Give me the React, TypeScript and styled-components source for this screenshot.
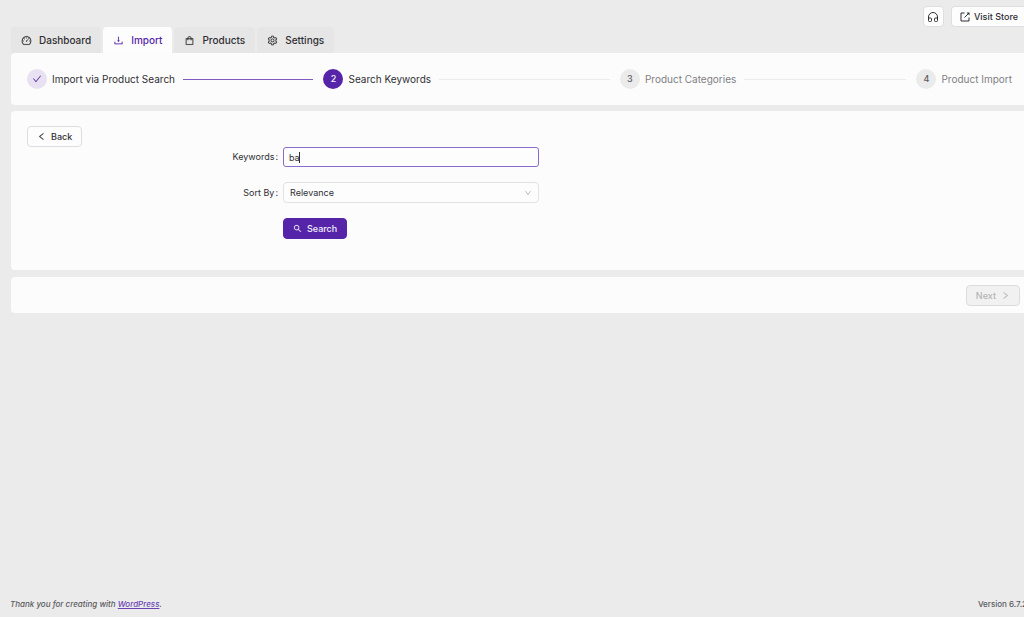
import React from "react";
import styled, { createGlobalStyle, css } from "styled-components";
import {
  AiOutlineCheck,
  AiOutlineDashboard,
  AiOutlineDown,
  AiOutlineDownload,
  AiOutlineLeft,
  AiOutlineRight,
  AiOutlineSearch,
  AiOutlineSetting,
  AiOutlineShopping,
} from "react-icons/ai";

const purple = "#5624a8";

const GlobalStyle = createGlobalStyle`
  *, *::before, *::after { box-sizing: border-box; }
  body {
    margin: 0;
    background: #ebebeb;
    color: #2f2f33;
    font-family: Inter, "Liberation Sans", sans-serif;
    font-size: 9px;
    line-height: 14px;
  }
  button, input, select { font: inherit; color: inherit; margin: 0; }
  svg { flex: none; display: block; }
`;

const Page = styled.div`
  min-height: 100vh;
  display: flex;
  flex-direction: column;
  padding-left: 11px;
  overflow-x: hidden;
`;

const TopBar = styled.header`
  display: flex;
  justify-content: flex-end;
  gap: 7px;
  height: 27px;
  padding-top: 6px;
`;

const Button = styled.button<{ $kind?: "primary" | "icon" | "bleed" }>`
  display: inline-flex;
  align-items: center;
  justify-content: center;
  gap: 5px;
  height: 21px;
  padding: 0 9px;
  border: 1px solid #dfdde2;
  border-radius: 4px;
  background: #fdfdfd;
  font-weight: 500;
  white-space: nowrap;

  ${({ $kind }) =>
    $kind === "primary" &&
    css`
      background: ${purple};
      border-color: ${purple};
      color: #f4effc;
    `}
  ${({ $kind }) =>
    $kind === "icon" &&
    css`
      width: 21px;
      padding: 0;
    `}
  ${({ $kind }) =>
    $kind === "bleed" &&
    css`
      gap: 4px;
      padding: 0 6px 0 8px;
      border-right: 0;
      border-radius: 4px 0 0 4px;
    `}
  &:disabled {
    background: #f1f1f1;
    border-color: #dcdcdc;
    color: #b4b4b4;
  }
`;

const Tabs = styled.nav`
  display: flex;
  gap: 2px;
`;

const Tab = styled.button<{ $active?: boolean }>`
  display: flex;
  align-items: center;
  gap: 7px;
  height: 26px;
  padding: 0 10px;
  border: 0;
  border-radius: 4px 4px 0 0;
  background: ${({ $active }) => ($active ? "#fdfdfd" : "#e6e6e6")};
  color: ${({ $active }) => ($active ? purple : "#2f2f33")};
  font-size: 10px;
  font-weight: 500;
`;

const Panel = styled.section`
  background: #fcfcfc;
  border-radius: 4px 0 0 4px;
`;

const Steps = styled.ol`
  display: flex;
  margin: 0;
  padding: 16px 12px 16px 16px;
  list-style: none;
`;

const Step = styled.li<{ $state: "done" | "active" | "wait" }>`
  display: flex;
  align-items: center;
  flex: 1;
  min-width: 0;
  height: 20px;
  font-size: 10px;
  white-space: nowrap;
  color: ${({ $state }) => ($state === "wait" ? "#7f7f83" : "#2f2f33")};

  &:not(:last-child)::after {
    content: "";
    flex: 1;
    height: 1px;
    margin: 0 10px 0 8px;
    background: ${({ $state }) => ($state === "done" ? "#7d5bc0" : "#ececec")};
  }
  &:last-child { flex: none; }
`;

const StepMark = styled.span<{ $state: "done" | "active" | "wait" }>`
  display: flex;
  align-items: center;
  justify-content: center;
  width: 20px;
  height: 20px;
  margin-right: 5px;
  border-radius: 50%;
  font-size: 9px;
  font-weight: 500;
  background: ${({ $state }) =>
    $state === "done" ? "#e7e1f1" : $state === "active" ? purple : "#ebebeb"};
  color: ${({ $state }) =>
    $state === "done" ? purple : $state === "active" ? "#f4effc" : "#5c5c60"};
`;

const Main = styled.main`
  display: flex;
  flex-direction: column;
  gap: 6px;
`;

const SearchPanel = styled(Panel)`
  padding: 15px 16px 31px;
`;

const Form = styled.form`
  display: grid;
  grid-template-columns: 251px 256px;
  column-gap: 5px;
  row-gap: 15px;
  align-items: center;
`;

const Label = styled.label`
  text-align: right;

  &::after {
    content: ":";
    margin-left: 1px;
  }
`;

const Field = styled.div`
  position: relative;
  display: flex;
  align-items: center;
`;

const TextInput = styled.input`
  width: 100%;
  height: 20px;
  padding: 0 5px;
  border: 1px solid #8a6bc9;
  border-radius: 3px;
  background: #fdfdfd;
  outline: 0;
  caret-color: transparent;
`;

const Caret = styled.span`
  position: absolute;
  left: 16px;
  width: 1px;
  height: 11px;
  background: #2f2f33;
  pointer-events: none;
`;

const Select = styled.select`
  appearance: none;
  width: 100%;
  height: 21px;
  padding: 0 20px 0 6px;
  border: 1px solid #e2e2e2;
  border-radius: 4px;
  background: #fdfdfd;
`;

const SelectArrow = styled(AiOutlineDown)`
  position: absolute;
  right: 7px;
  color: #b0b0b0;
  pointer-events: none;
`;

const Submit = styled(Button)`
  grid-column: 2;
  justify-self: start;
`;

const NextPanel = styled(Panel)`
  display: flex;
  justify-content: flex-end;
  margin-top: 1px;
  padding: 8px 4px 7px;
`;

const Footer = styled.footer`
  display: flex;
  justify-content: space-between;
  margin-top: auto;
  margin-left: -1px;
  padding-bottom: 6px;
  font-size: 8px;
  font-weight: 500;
  white-space: nowrap;
  color: #5a5a5e;

  a { color: #6a44b4; }
`;

const Version = styled.span`
  margin-right: -3px;
`;

const HeadsetIcon = () => (
  <svg width="12" height="12" viewBox="0 0 24 24" fill="none" stroke="currentColor" strokeWidth="2">
    <path d="M3 18v-6a9 9 0 0 1 18 0v6" />
    <path d="M3 14h4q2 0 2 2v3q0 2-2 2H5q-2 0-2-2zM21 14h-4q-2 0-2 2v3q0 2 2 2h2q2 0 2-2z" />
  </svg>
);

const VisitIcon = () => (
  <svg width="10" height="10" viewBox="0 0 20 20" fill="none" stroke="currentColor" strokeWidth="2">
    <path d="M9 2H2v16h16v-7M9 11l8-8" />
    <path d="M13 1h6v6z" fill="currentColor" stroke="none" />
  </svg>
);

const tabs = [
  { name: "Dashboard", Icon: AiOutlineDashboard },
  { name: "Import", Icon: AiOutlineDownload, active: true },
  { name: "Products", Icon: AiOutlineShopping },
  { name: "Settings", Icon: AiOutlineSetting },
];

const steps = [
  { title: "Import via Product Search", state: "done" },
  { title: "Search Keywords", state: "active" },
  { title: "Product Categories", state: "wait" },
  { title: "Product Import", state: "wait" },
] as const;

export default function App() {
  return (
    <Page>
      <GlobalStyle />
      <TopBar>
        <Button type="button" $kind="icon" aria-label="Support">
          <HeadsetIcon />
        </Button>
        <Button type="button" $kind="bleed">
          <VisitIcon />
          Visit Store
        </Button>
      </TopBar>
      <Tabs>
        {tabs.map(({ name, Icon, active }) => (
          <Tab key={name} type="button" $active={active}>
            <Icon size={11} strokeWidth={10} />
            {name}
          </Tab>
        ))}
      </Tabs>
      <Main>
        <Panel>
          <Steps>
            {steps.map(({ title, state }, i) => (
              <Step key={title} $state={state}>
                <StepMark $state={state}>
                  {state === "done" ? <AiOutlineCheck size={10} /> : i + 1}
                </StepMark>
                {title}
              </Step>
            ))}
          </Steps>
        </Panel>
        <SearchPanel>
          <Button type="button">
            <AiOutlineLeft size={9} strokeWidth={30} />
            Back
          </Button>
          <Form onSubmit={(e) => e.preventDefault()}>
            <Label htmlFor="keywords">Keywords</Label>
            <Field>
              <TextInput id="keywords" defaultValue="ba" />
              <Caret />
            </Field>
            <Label htmlFor="sort">Sort By</Label>
            <Field>
              <Select id="sort">
                <option>Relevance</option>
              </Select>
              <SelectArrow size={8} />
            </Field>
            <Submit type="submit" $kind="primary">
              <AiOutlineSearch size={9} strokeWidth={20} />
              Search
            </Submit>
          </Form>
        </SearchPanel>
        <NextPanel>
          <Button type="button" disabled>
            Next
            <AiOutlineRight size={9} strokeWidth={30} />
          </Button>
        </NextPanel>
      </Main>
      <Footer>
        <em>
          Thank you for creating with <a href="#wordpress">WordPress</a>.
        </em>
        <Version>Version 6.7.2</Version>
      </Footer>
    </Page>
  );
}
